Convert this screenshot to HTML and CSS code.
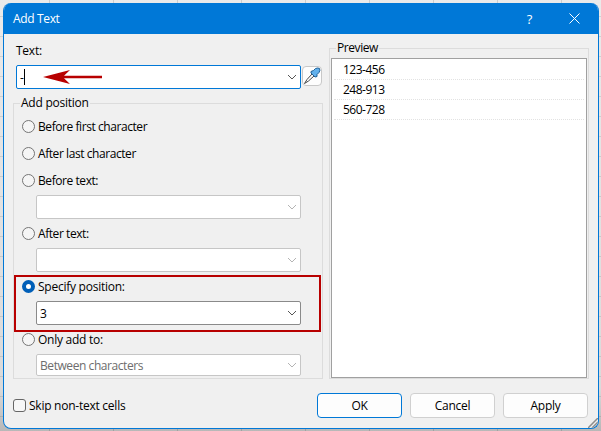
FILE: index.html
```
<!DOCTYPE html>
<html lang="en">
<head>
    <meta charset="UTF-8">
    <meta name="viewport" content="width=device-width, initial-scale=1.0">
    <title>Add Text</title>
    <link rel="stylesheet" href="styles.css">
</head>
<body>
    <div class="dialog">
        <header class="title-bar">
            <span class="title">Add Text</span>
            <span class="help">?</span>
            <svg class="close" width="11" height="11" viewBox="0 0 11 11"><path d="M.5 .5l10 10M10.500 .5l-10 10"/></svg>
        </header>

        <div class="content">
            <section class="left">
                <div class="text-label">Text:</div>
                <div class="text-row">
                    <div class="combo focused">
                        <span>-</span><i class="caret"></i>
                        <svg class="arrow" width="60" height="14" viewBox="0 0 60 14"><path d="M0 7L27 0L21 5.700H59V8.300H21L27 14Z"/></svg>
                        <svg class="chevron" width="10" height="6" viewBox="0 0 10 6"><path d="M1 1l4 4 4-4"/></svg>
                    </div>
                    <button class="picker">
                        <svg width="18" height="18" viewBox="0 0 18 18">
                            <path class="tube" d="M9.500 6.500L4 12.500L1.500 16.500L5.500 14L11.500 8.500"/>
                            <path class="bulb" d="M8 4.500L10.500 3.500L12.500 1.500Q15 .5 16.500 1.500Q17.500 3.500 16 5.500L14 7.500V9.500L12 10L8 6Z"/>
                        </svg>
                    </button>
                </div>

                <div class="group position">
                    <span class="legend">Add position</span>
                    <label class="radio tight">Before first character</label>
                    <label class="radio tight">After last character</label>
                    <label class="radio tight">Before text:</label>
                    <div class="combo disabled"><svg class="chevron" width="10" height="6" viewBox="0 0 10 6"><path d="M1 1l4 4 4-4"/></svg></div>
                    <label class="radio tight">After text:</label>
                    <div class="combo disabled"><svg class="chevron" width="10" height="6" viewBox="0 0 10 6"><path d="M1 1l4 4 4-4"/></svg></div>
                    <div class="highlight">
                        <label class="radio checked">Specify position:</label>
                        <div class="combo"><span>3</span><svg class="chevron" width="10" height="6" viewBox="0 0 10 6"><path d="M1 1l4 4 4-4"/></svg></div>
                    </div>
                    <label class="radio">Only add to:</label>
                    <div class="combo disabled short tight"><span>Between characters</span><svg class="chevron" width="10" height="6" viewBox="0 0 10 6"><path d="M1 1l4 4 4-4"/></svg></div>
                </div>
            </section>

            <section class="group preview">
                <span class="legend tight">Preview</span>
                <ul class="list">
                    <li>123-456</li>
                    <li>248-913</li>
                    <li>560-728</li>
                </ul>
            </section>
        </div>

        <footer class="footer">
            <label class="checkbox">Skip non-text cells</label>
            <button class="btn primary">OK</button>
            <button class="btn">Cancel</button>
            <button class="btn">Apply</button>
        </footer>
        <svg class="grip" width="10" height="10" viewBox="0 0 10 10"><path d="M0 10L10 0M4 10L10 4"/></svg>
    </div>
</body>
</html>
```

FILE: styles.css
```
*,
*::before {
    box-sizing: border-box;
}
body {
    margin: 0;
    padding: 3px 2px 2px 3px;
    height: 431px;
    overflow: hidden;
    font-family: "Open Sans", "Noto Sans", sans-serif;
    font-size: 12px;
    letter-spacing: -0.25px;
    color: #000;
    /* spreadsheet cells behind the dialog */
    background:
        repeating-linear-gradient(to right, transparent 0 49px, rgba(0, 0, 0, 0.13) 49px 50px, transparent 50px 64px),
        repeating-linear-gradient(to bottom, transparent 0 16px, rgba(0, 0, 0, 0.1) 16px 17px, transparent 17px 20px),
        linear-gradient(#eaeaea, #dadada 90%, #b8b8b8);
}
.dialog {
    position: relative;
    width: 596px;
    height: 426px;
    border: 1px solid #0078d7;
    border-top: none;
    border-radius: 8px;
    background-color: #f0f0f0;
    overflow: hidden;
}
.title-bar {
    display: flex;
    align-items: center;
    height: 31px;
    padding: 0 18px 0 9px;
    background-color: #0078d7;
    color: #fff;
}
.title {
    flex: 1;
    letter-spacing: -0.35px;
}
.help {
    font-size: 13px;
    margin-right: 37px;
}
svg {
    display: block;
    flex: none;
    fill: none;
}
.close {
    stroke: #fff;
    stroke-width: 1;
}
.tight {
    letter-spacing: -0.43px;
}
.content {
    display: flex;
    gap: 6px;
    height: 345px;
    padding-left: 9px;
}
.left {
    width: 310px;
}
.text-label {
    height: 31px;
    padding: 9px 0 0 3px;
    line-height: 16px;
}
.text-row {
    display: flex;
    gap: 1px;
    padding-left: 3px;
}
.combo {
    display: flex;
    align-items: center;
    width: 265px;
    height: 24px;
    margin-left: 22px;
    padding: 0 3px 0 3px;
    border: 1px solid #8a8a8a;
    border-radius: 2px;
    background-color: #fff;
}
.combo.focused {
    width: 285px;
    margin-left: 0;
    border-color: #0078d7;
}
.combo.disabled {
    border-color: #c6c6c6;
    color: #6d6d6d;
}
.combo.short {
    height: 22px;
}
.chevron {
    margin-left: auto;
    stroke: #555;
}
.disabled .chevron {
    stroke: #b4b4b4;
}
.caret {
    width: 1px;
    height: 16px;
    background-color: #000;
}
.arrow {
    margin-left: 18px;
    fill: #b80000;
}
.picker {
    display: flex;
    align-items: center;
    justify-content: center;
    width: 20px;
    height: 20px;
    margin-top: 1px;
    padding: 0;
    border: 1px solid #c8c8c8;
    border-radius: 4px;
    background-color: #fdfdfd;
}
.tube {
    fill: #fff;
    stroke: #444;
}
.bulb {
    fill: #63b1ec;
    stroke: #1d5f96;
}
.group {
    border: 1px solid #dcdcdc;
}
.legend {
    display: block;
    width: max-content;
    height: 16px;
    margin: -9px 0 0 6px;
    padding: 0 1px;
    line-height: 16px;
    background-color: #f0f0f0;
}
.position {
    height: 276px;
    margin-top: 14px;
}
.radio {
    display: flex;
    align-items: center;
    gap: 3px;
    height: 17px;
    margin: 7px 0 10px 8px;
}
.radio::before {
    content: "";
    width: 13px;
    height: 13px;
    border: 1px solid #757575;
    border-radius: 50%;
    background-color: #f5f5f5;
}
.radio.checked::before {
    border: 4px solid #005fb8;
    background-color: #fff;
}
.radio:has(+ .combo) {
    margin-bottom: 6px;
}
.combo + .radio {
    margin-top: 6px;
}
.highlight {
    width: 307px;
    height: 57px;
    margin-top: 3px;
    padding-top: 1px;
    border: 2px solid #b80000;
}
.highlight .radio {
    margin: 0 0 6px 6px;
}
.highlight .combo {
    margin-left: 20px;
}
.highlight + .radio {
    margin-top: -1px;
}
.preview {
    width: 260px;
    height: 331px;
    margin-top: 14px;
    padding: 0 1px;
}
.preview .legend {
    margin-left: 5px;
}
.list {
    height: 320px;
    margin: 2px 0 0;
    padding: 1px 2px;
    border: 1px solid #a0a0a0;
    list-style: none;
    background-color: #fff;
}
.list li {
    height: 20px;
    padding-left: 9px;
    line-height: 20px;
    letter-spacing: -0.5px;
    border-bottom: 1px dotted #e2e2e2;
}
.footer {
    display: flex;
    align-items: center;
    gap: 8px;
    padding: 14px 10px 0 9px;
}
.checkbox {
    display: flex;
    align-items: center;
    gap: 3px;
    flex: 1;
}
.checkbox::before {
    content: "";
    width: 13px;
    height: 13px;
    border: 1px solid #666;
    border-radius: 3px;
    background-color: #f7f7f7;
}
.btn {
    width: 85px;
    height: 25px;
    padding: 0;
    border: 1px solid #d0d0d0;
    border-radius: 4px;
    background-color: #fdfdfd;
    color: #000;
    font: inherit;
    letter-spacing: inherit;
}
.btn.primary {
    border-color: #0078d7;
}
.grip {
    position: absolute;
    right: 0;
    bottom: 0;
    stroke: #8c8c8c;
    stroke-width: 1.5;
}
```
